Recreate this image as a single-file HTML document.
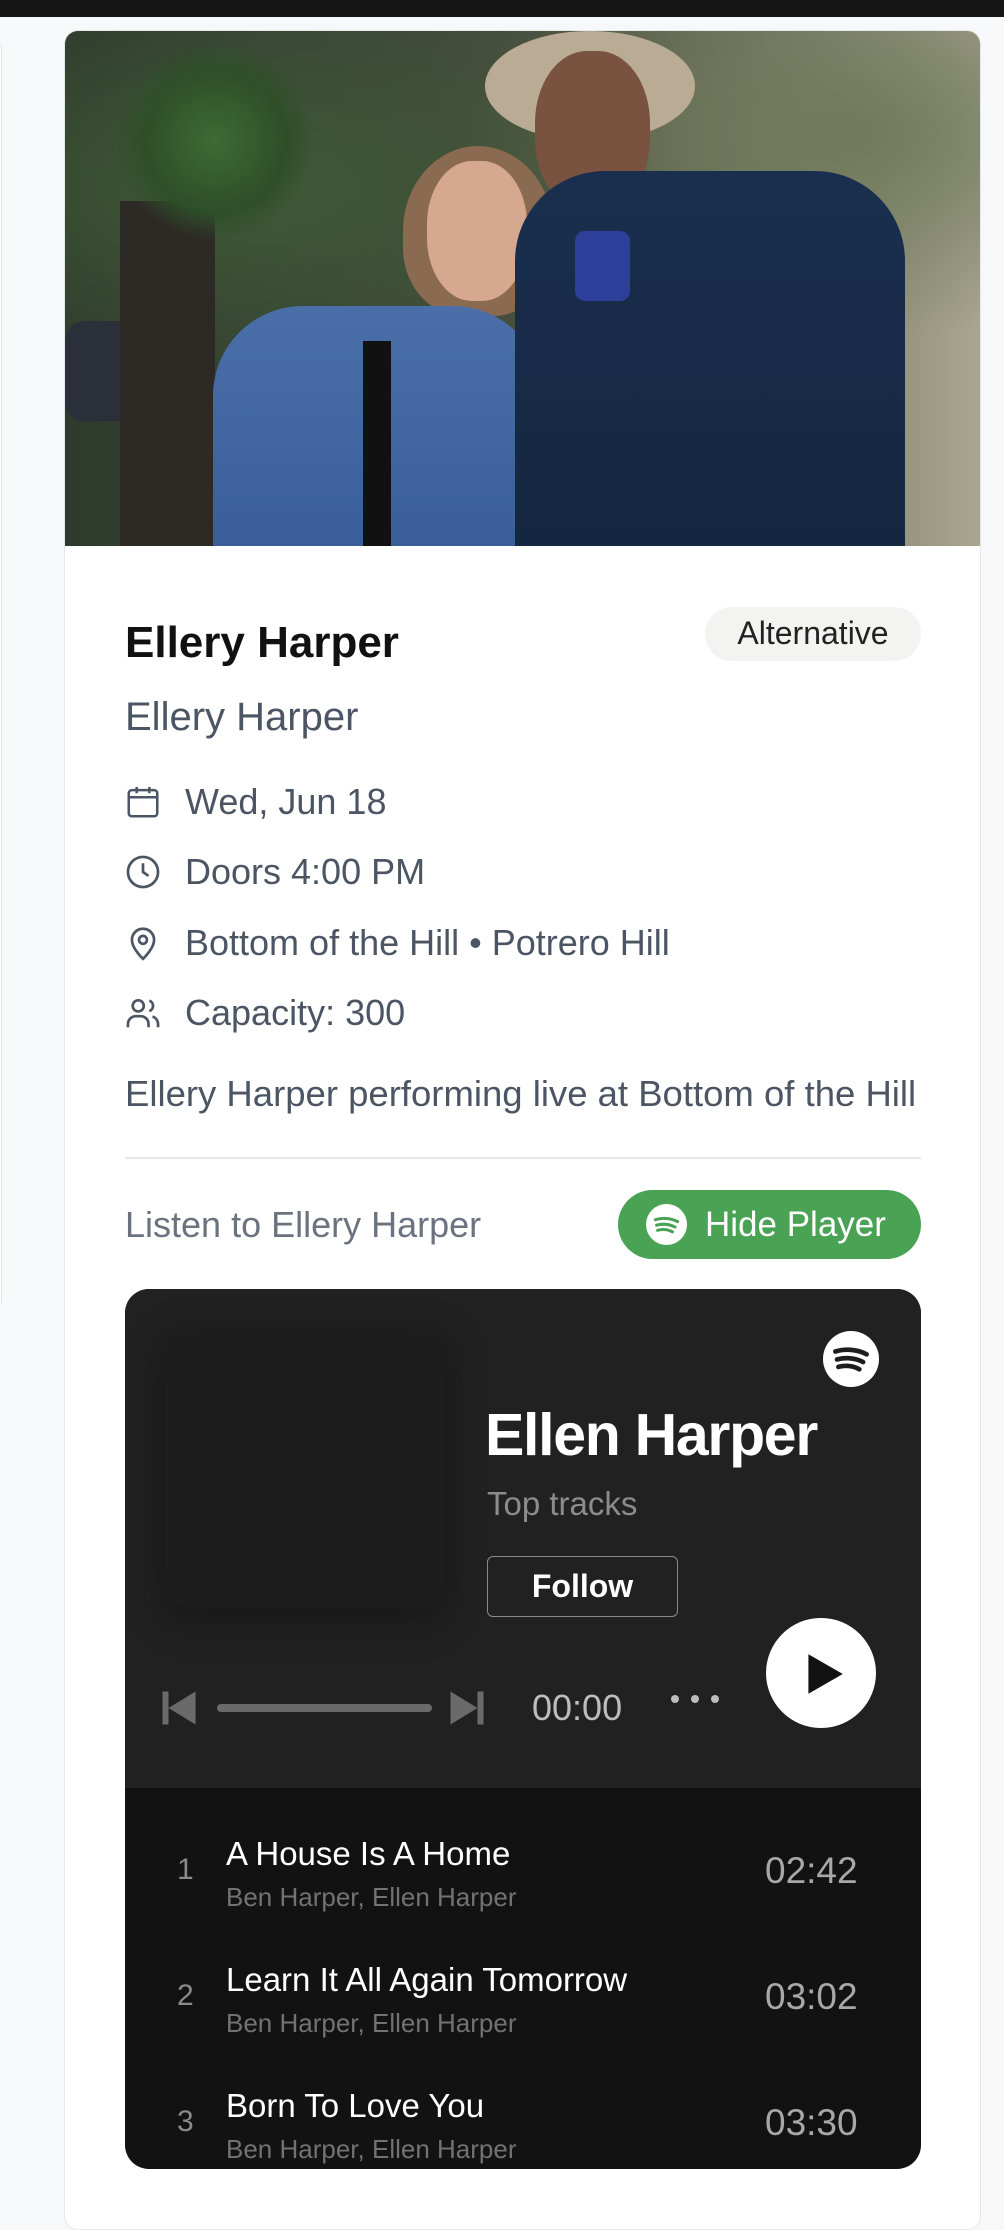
<!DOCTYPE html>
<html><head><meta charset="utf-8"><style>
*{margin:0;padding:0;box-sizing:border-box}
body{width:1004px;height:2178px;background:#f7f8fa;font-family:"Liberation Sans",sans-serif;position:relative;overflow:hidden}
.topbar{position:absolute;left:0;top:0;width:1004px;height:17px;background:#151515}
.side{position:absolute;left:-10px;top:42px;width:12px;height:1265px;border:1px solid #e3e5e8;background:#fff;border-radius:0 6px 6px 0}
.card{position:absolute;left:64px;top:30px;width:917px;height:2200px;background:#fff;border:1px solid #e5e7eb;border-radius:14px;overflow:hidden}
.photo{position:absolute;left:0;top:0;width:917px;height:515px;background:linear-gradient(90deg,#2e3a2c 0%,#3b4536 30%,#4a5140 55%,#7d7e6a 80%,#aaa690 100%);overflow:hidden}
.abs{position:absolute}
.t{position:absolute;white-space:nowrap}
.ic{position:absolute;left:59px;width:38px;height:38px}
</style></head><body>
<div class="topbar"></div>
<div class="side"></div>
<div class="card">
 <div class="photo">
  <div class="abs" style="left:0;top:0;width:917px;height:515px;background:radial-gradient(ellipse at 20% 30%,#3f5a36 0,transparent 40%),radial-gradient(ellipse at 85% 20%,#6f7a5a 0,transparent 35%)"></div>
  <div class="abs" style="left:0;top:290px;width:130px;height:100px;background:#2a2f3a;border-radius:20px"></div>
  <div class="abs" style="left:55px;top:170px;width:95px;height:345px;background:#2d2a26"></div>
  <div class="abs" style="left:50px;top:10px;width:200px;height:200px;background:radial-gradient(circle,#3e6a35 0,#2e4f28 50%,transparent 70%)"></div>
  <div class="abs" style="left:338px;top:115px;width:150px;height:170px;background:#8a6a50;border-radius:50% 50% 40% 40%"></div>
  <div class="abs" style="left:362px;top:130px;width:100px;height:140px;background:#d7a890;border-radius:45%"></div>
  <div class="abs" style="left:148px;top:275px;width:330px;height:260px;background:linear-gradient(180deg,#4a6fa8,#385d99);border-radius:90px 90px 0 0"></div>
  <div class="abs" style="left:298px;top:310px;width:28px;height:210px;background:#111"></div>
  <div class="abs" style="left:420px;top:0;width:210px;height:110px;background:#b9ab94;border-radius:50%"></div>
  <div class="abs" style="left:470px;top:20px;width:115px;height:160px;background:#7a5240;border-radius:45%"></div>
  <div class="abs" style="left:450px;top:140px;width:390px;height:400px;background:linear-gradient(180deg,#1a2f4f,#14263f);border-radius:90px 90px 0 0"></div>
  <div class="abs" style="left:510px;top:200px;width:55px;height:70px;background:#2e3f9a;border-radius:10px"></div>
 </div>
 <div class="t" style="left:60px;top:587px;font-size:44px;font-weight:bold;color:#111">Ellery Harper</div>
 <div class="abs" style="left:640px;top:576px;width:216px;height:54px;background:#f3f3f2;border-radius:27px"></div>
 <div class="t" style="left:640px;top:584px;width:216px;text-align:center;font-size:32px;color:#222">Alternative</div>
 <div class="t" style="left:60px;top:664px;font-size:40px;color:#4b5563">Ellery Harper</div>

 <svg class="ic" style="top:752px" viewBox="0 0 24 24" fill="none" stroke="#4b5563" stroke-width="1.6"><rect x="3" y="4.5" width="18" height="16.5" rx="2"/><path d="M8 2.5v4M16 2.5v4M3 9h18"/><path d="M8 13h.01M12 13h.01M16 13h.01M8 17h.01M12 17h.01M16 17h.01" stroke-width="2"/></svg>
 <div class="t" style="left:120px;top:750px;font-size:36px;color:#4b5563">Wed, Jun 18</div>
 <svg class="ic" style="top:822px" viewBox="0 0 24 24" fill="none" stroke="#4b5563" stroke-width="1.7"><circle cx="12" cy="12" r="9.5"/><path d="M12 6.5V12l3.5 2.5"/></svg>
 <div class="t" style="left:120px;top:820px;font-size:36px;color:#4b5563">Doors 4:00 PM</div>
 <svg class="ic" style="top:893px" viewBox="0 0 24 24" fill="none" stroke="#4b5563" stroke-width="1.7"><path d="M12 22s7-6.5 7-12a7 7 0 0 0-14 0c0 5.5 7 12 7 12z"/><circle cx="12" cy="10" r="2.5"/></svg>
 <div class="t" style="left:120px;top:891px;font-size:36px;color:#4b5563">Bottom of the Hill • Potrero Hill</div>
 <svg class="ic" style="top:963px" viewBox="0 0 24 24" fill="none" stroke="#4b5563" stroke-width="1.7"><circle cx="9" cy="7.5" r="3.5"/><path d="M2.5 21v-2a5 5 0 0 1 5-5h3a5 5 0 0 1 5 5v2M16 4.2a3.5 3.5 0 0 1 0 6.6M21.5 21v-2a5 5 0 0 0-3.5-4.8"/></svg>
 <div class="t" style="left:120px;top:961px;font-size:36px;color:#4b5563">Capacity: 300</div>
 <div class="t" style="left:60px;top:1042px;font-size:36.5px;color:#4b5563">Ellery Harper performing live at Bottom of the Hill</div>
 <div class="abs" style="left:60px;top:1126px;width:796px;height:2px;background:#e5e7eb"></div>
 <div class="t" style="left:60px;top:1173px;font-size:36px;color:#6b7280">Listen to Ellery Harper</div>
 <div class="abs" style="left:553px;top:1159px;width:303px;height:69px;background:#4aa354;border-radius:35px"></div>
 <svg class="abs" style="left:581px;top:1173px;width:41px;height:41px" viewBox="0 0 24 24"><circle cx="12" cy="12" r="12" fill="#fff"/><path d="M5.5 9.2c4-1.3 9-1 13 1.1M6.2 12.4c3.4-1 7.5-.7 10.8 1.1M6.8 15.4c2.8-.8 6-.5 8.7.9" stroke="#4aa354" stroke-width="1.8" fill="none" stroke-linecap="round"/></svg>
 <div class="t" style="left:640px;top:1174px;font-size:35px;color:#fff">Hide Player</div>

 <div class="abs" style="left:60px;top:1258px;width:796px;height:880px;background:#121212;border-radius:24px;overflow:hidden">
  <div class="abs" style="left:0;top:0;width:796px;height:499px;background:#212121"></div>
  <div class="abs" style="left:40px;top:41px;width:280px;height:277px;background:#1d1d1d;border-radius:22px;box-shadow:0 10px 40px rgba(0,0,0,.35)"></div>
  <svg class="abs" style="left:698px;top:42px;width:56px;height:56px" viewBox="0 0 24 24"><circle cx="12" cy="12" r="12" fill="#fff"/><path d="M5.3 8.8c4.2-1.3 9.3-1 13.4 1.2M6 12.2c3.5-1 7.8-.7 11.2 1.1M6.6 15.4c2.9-.8 6.2-.5 9 1" stroke="#1d1d1d" stroke-width="2" fill="none" stroke-linecap="round"/></svg>
  <div class="t" style="left:360px;top:112px;font-size:59px;font-weight:bold;color:#fff;letter-spacing:-1.3px">Ellen Harper</div>
  <div class="t" style="left:362px;top:196px;font-size:33px;color:#8c8c8c">Top tracks</div>
  <div class="abs" style="left:362px;top:267px;width:191px;height:61px;border:1.5px solid #8a8a8a;border-radius:6px"></div>
  <div class="t" style="left:362px;top:279px;width:191px;text-align:center;font-size:32px;font-weight:bold;color:#fff">Follow</div>
  <div class="abs" style="left:641px;top:329px;width:110px;height:110px;background:#fff;border-radius:50%"></div>
  <svg class="abs" style="left:673px;top:360px;width:50px;height:50px" viewBox="0 0 24 24"><path d="M5 2.5 21.5 12 5 21.5z" fill="#121212"/></svg>
  <svg class="abs" style="left:36px;top:401px;width:36px;height:36px" viewBox="0 0 24 24" fill="#6a6a6a"><rect x="1" y="1" width="4" height="22"/><path d="M23 1v22L5 12z"/></svg>
  <div class="abs" style="left:92px;top:415px;width:215px;height:8px;background:#6a6a6a;border-radius:4px"></div>
  <svg class="abs" style="left:324px;top:401px;width:36px;height:36px" viewBox="0 0 24 24" fill="#6a6a6a"><rect x="19" y="1" width="4" height="22"/><path d="M1 1v22l18-11z"/></svg>
  <div class="t" style="left:407px;top:398px;font-size:36px;color:#bdbdbd">00:00</div>
  <div class="abs" style="left:546px;top:406px;width:8px;height:8px;background:#bbb;border-radius:50%"></div>
  <div class="abs" style="left:566px;top:406px;width:8px;height:8px;background:#bbb;border-radius:50%"></div>
  <div class="abs" style="left:586px;top:406px;width:8px;height:8px;background:#bbb;border-radius:50%"></div>

  <div class="t" style="left:52px;top:564px;font-size:30px;color:#8a8a8a">1</div>
  <div class="t" style="left:101px;top:546px;font-size:33px;color:#fff">A House Is A Home</div>
  <div class="t" style="left:101px;top:593px;font-size:26px;color:#727272">Ben Harper, Ellen Harper</div>
  <div class="t" style="left:640px;top:561px;font-size:37px;color:#a8a8a8">02:42</div>

  <div class="t" style="left:52px;top:690px;font-size:30px;color:#8a8a8a">2</div>
  <div class="t" style="left:101px;top:672px;font-size:33px;color:#fff">Learn It All Again Tomorrow</div>
  <div class="t" style="left:101px;top:719px;font-size:26px;color:#727272">Ben Harper, Ellen Harper</div>
  <div class="t" style="left:640px;top:687px;font-size:37px;color:#a8a8a8">03:02</div>

  <div class="t" style="left:52px;top:816px;font-size:30px;color:#8a8a8a">3</div>
  <div class="t" style="left:101px;top:798px;font-size:33px;color:#fff">Born To Love You</div>
  <div class="t" style="left:101px;top:845px;font-size:26px;color:#727272">Ben Harper, Ellen Harper</div>
  <div class="t" style="left:640px;top:813px;font-size:37px;color:#a8a8a8">03:30</div>
 </div>
</div>
</body></html>
